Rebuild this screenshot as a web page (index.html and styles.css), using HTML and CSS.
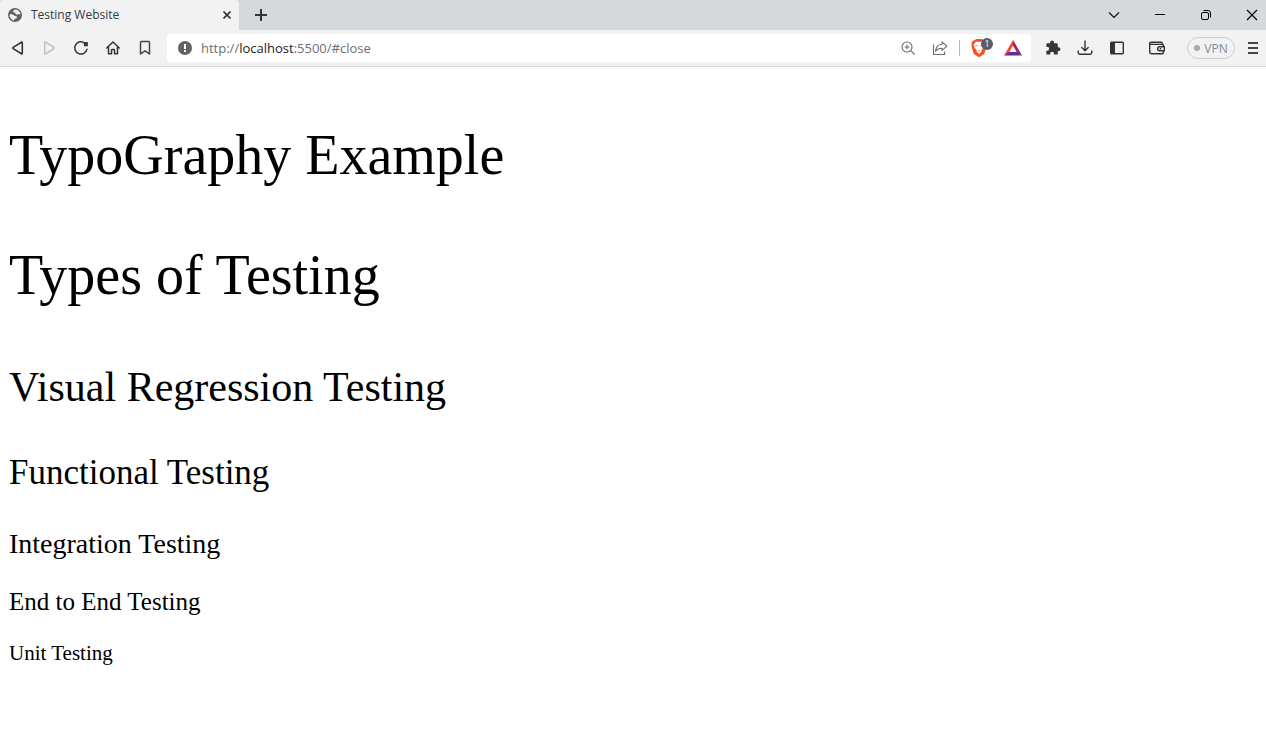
FILE: index.html
```
<!DOCTYPE html>
<html lang="en">
<head>
    <meta charset="UTF-8">
    <meta name="viewport" content="width=device-width, initial-scale=1.0">
    <title>Testing Website</title>
    <link rel="stylesheet" href="styles.css">
</head>
<body>
    <header class="browser">
        <div class="tab-strip">
            <div class="tab">
                <svg class="favicon" width="14" height="14" viewBox="0 0 14 14">
                    <circle cx="7" cy="7" r="7" fill="#5f6368"/>
                    <path d="M8 1.6C6.2 1.8 5 2.8 5.2 3.8 5.4 4.8 7.2 4.4 7.6 5.4 8 6.6 9.4 6.8 10.4 6.2 11.2 5.8 12 6.4 12.4 7A5.5 5.5 0 0 0 8 1.6Z" fill="#f2f2f2"/>
                    <path d="M1.6 6.4C3.4 6 5 6.2 6 7.2 6.6 8 7.4 7.8 8.4 8.2 9.4 8.8 9 10.2 7.8 10.6 6.6 11 6 11.6 6 12.4A5.5 5.5 0 0 1 1.6 6.4Z" fill="#f2f2f2"/>
                </svg>
                <span class="tab-title">Testing Website</span>
                <button class="tab-close" aria-label="Close tab">
                    <svg width="8" height="8" viewBox="0 0 8 8"><path d="M.5.5l7 7M7.5.5l-7 7" stroke="#333" stroke-width="1.6"/></svg>
                </button>
            </div>
            <button class="new-tab" aria-label="New tab">
                <svg width="12" height="12" viewBox="0 0 12 12"><path d="M6 0v12M0 6h12" stroke="#333" stroke-width="2"/></svg>
            </button>
            <div class="window-buttons">
                <button aria-label="Search tabs">
                    <svg width="12" height="12" viewBox="0 0 12 12"><path d="M1 3.5l5 5 5-5" fill="none" stroke="#111" stroke-width="1.2"/></svg>
                </button>
                <button aria-label="Minimize">
                    <svg width="12" height="12" viewBox="0 0 12 12"><path d="M1 5.5h10" stroke="#000"/></svg>
                </button>
                <button aria-label="Restore">
                    <svg width="12" height="12" viewBox="0 0 12 12" fill="none" stroke="#000"><rect x="1.5" y="3.5" width="7" height="7" rx="1.5"/><path d="M3.5 1.5H8a2.500 2.500 0 0 1 2.500 2.500v4.500"/></svg>
                </button>
                <button aria-label="Close">
                    <svg width="12" height="12" viewBox="0 0 12 12"><path d="M1 1l10 10M11 1L1 11" stroke="#000" stroke-width="1.2"/></svg>
                </button>
            </div>
        </div>

        <div class="toolbar">
            <div class="nav-buttons">
                <button aria-label="Back">
                    <svg width="16" height="16" viewBox="0 0 16 16"><path d="M13.300 2.700v10.600q0 1-.9.5L4.200 8.600q-.8-.6 0-1.200l8.200-5.200q.9-.5.9.5z" fill="none" stroke="#333" stroke-width="1.6"/></svg>
                </button>
                <button aria-label="Forward" disabled>
                    <svg width="16" height="16" viewBox="0 0 16 16"><path d="M3.700 2.700v10.600q0 1 .9.5l8.200-5.200q.8-.6 0-1.200L4.600 2.200q-.9-.5-.9.5z" fill="none" stroke="#bbb" stroke-width="1.4"/></svg>
                </button>
                <button aria-label="Reload">
                    <svg width="16" height="16" viewBox="0 0 16 16"><path d="M14 9.200A6.200 6.200 0 1 1 11.800 3" fill="none" stroke="#333" stroke-width="1.5" stroke-linecap="round"/><path d="M10.500 2.300L14.800 2V6.200H11z" fill="#333"/></svg>
                </button>
                <button aria-label="Home">
                    <svg width="16" height="16" viewBox="0 0 16 16"><path d="M1.700 8L8 2l6.300 6M3.500 7v6.800h3V10q0-.6.6-.6h1.800q.6 0 .6.6v3.800h3V7" fill="none" stroke="#333" stroke-width="1.5" stroke-linecap="round" stroke-linejoin="round"/></svg>
                </button>
                <button aria-label="Bookmark">
                    <svg width="16" height="16" viewBox="0 0 16 16"><path d="M3.500 14V2.500q0-.9.9-.9h7.200q.9 0 .9.9V14L8 10.800z" fill="none" stroke="#444" stroke-width="1.5" stroke-linejoin="round"/></svg>
                </button>
            </div>

            <div class="address-bar">
                <svg width="14" height="14" viewBox="0 0 14 14"><circle cx="7" cy="7" r="7" fill="#5f6368"/><path d="M7 3v5M7 9v2" stroke="#fff" stroke-width="2"/></svg>
                <a class="url" href="#close">http://<span class="host">localhost</span>:5500/#close</a>
                <div class="address-actions">
                    <button aria-label="Zoom">
                        <svg width="16" height="16" viewBox="0 0 16 16" fill="none" stroke="#6b6e73" stroke-width="1.1"><circle cx="7" cy="7" r="5"/><path d="M10.700 10.700l3.800 3.800M7 4.600v4.800M4.600 7h4.800"/></svg>
                    </button>
                    <button aria-label="Share">
                        <svg width="16" height="16" viewBox="0 0 16 16" fill="none" stroke="#6b6e73" stroke-width="1.1"><path d="M1.500 4.500v10H12.500V11.500"/><path d="M10 2l5 4.200-5 4.200V8.200C7 8.100 5 9 3.500 11.200 3.800 7.500 6 4.600 10 4.300z" stroke-linejoin="round"/></svg>
                    </button>
                    <span class="divider"></span>
                    <button class="shields" aria-label="Brave Shields">
                        <svg width="16" height="18" viewBox="0 0 16 18">
                            <path d="M5 0h6l1.400 1.600 1.600-.1L15.600 4l-.5 1.400.4 1.500-2 7q-.3 1-1.200 1.600L8 18.300l-4.300-2.800q-.9-.6-1.200-1.600l-2-7 .4-1.500L.4 4 2 1.500l1.600.1z" fill="#fb4c1b"/>
                            <path d="M8 3l2.800-.5 2.700 3-1 1.400.3 1.800-2.500 2.200.3 1.700L8 14.900l-2.600-2.300.3-1.700-2.500-2.200.3-1.800-1-1.400 2.700-3z" fill="#fff"/>
                            <path d="M4.500 6l2.200.5-.4 1.300zM11.500 6l-2.200.5.4 1.300zM6.300 11l1.700.8 1.700-.8L8 12.700z" fill="#fb4c1b"/>
                        </svg>
                        <span class="badge">1</span>
                    </button>
                    <button aria-label="Brave Rewards">
                        <svg width="18" height="16" viewBox="0 0 18 16">
                            <path d="M9 0L0 15.500l5-3L9 5.500z" fill="#ff4724"/>
                            <path d="M9 0l9 15.500-5-3L9 5.500z" fill="#9e1f63"/>
                            <path d="M0 15.500h18l-5-3.500H5z" fill="#662d91"/>
                        </svg>
                    </button>
                </div>
            </div>

            <div class="tool-buttons">
                <button aria-label="Extensions">
                    <svg width="16" height="16" viewBox="0 0 16 16"><path d="M13.600 7.300h-.8V4.500q0-1.300-1.300-1.300H9V2.300a1.900 1.900 0 0 0-3.800 0v.9H2.500q-1.200 0-1.200 1.200v2.400h.9a2 2 0 0 1 0 4h-.9v2.600q0 1.200 1.200 1.200h2.700v-.9a1.900 1.900 0 0 1 3.800 0v.9h2.500q1.300 0 1.300-1.200V11h.8a1.850 1.850 0 0 0 0-3.700z" fill="#33373b"/></svg>
                </button>
                <button aria-label="Downloads">
                    <svg width="16" height="16" viewBox="0 0 16 16" fill="none" stroke="#333" stroke-width="1.4" stroke-linecap="round"><path d="M8 1v9.500M4.800 7.500L8 10.700l3.200-3.200M1.200 11v1.500q0 1.700 1.700 1.700h10.200q1.700 0 1.700-1.700V11"/></svg>
                </button>
                <button aria-label="Sidebar">
                    <svg width="16" height="16" viewBox="0 0 16 16"><rect x="1.700" y="2.200" width="12.600" height="11.600" rx="1" fill="none" stroke="#333" stroke-width="1.4"/><path d="M2 2h4v12H2z" fill="#333"/></svg>
                </button>
                <button class="wallet" aria-label="Wallet">
                    <svg width="16" height="16" viewBox="0 0 16 16" fill="none" stroke="#333" stroke-width="1.4"><path d="M14.300 7V5.300q0-.9-.9-.9H2.500q-1.800 0-1.800-1 0-1.100 1.500-1.100h10q1 0 1 1v1M.7 3.300V12q0 1.700 1.700 1.700h11q.9 0 .9-.9V11"/><path d="M15.300 6.800h-4.600a2 2 0 0 0 0 4h4.600zM10.700 8.800h1.500"/></svg>
                </button>
                <button class="vpn"><span class="dot"></span>VPN</button>
                <button aria-label="Menu">
                    <svg width="10" height="12" viewBox="0 0 10 12"><path d="M0 1h10M0 6h10M0 11h10" stroke="#444" stroke-width="2"/></svg>
                </button>
            </div>
        </div>
    </header>

    <main class="content">
        <h1>TypoGraphy Example</h1>
        <h1>Types of Testing</h1>
        <h2>Visual Regression Testing</h2>
        <h3>Functional Testing</h3>
        <h4>Integration Testing</h4>
        <h5>End to End Testing</h5>
        <h6>Unit Testing</h6>
    </main>
</body>
</html>
```
FILE: styles.css
```
* {
    box-sizing: border-box;
}
body {
    margin: 0;
    background-color: white;
    color: black;
    font-family: "Liberation Serif", "Times New Roman", serif;
}
button {
    display: flex;
    align-items: center;
    justify-content: center;
    flex-shrink: 0;
    padding: 0;
    border: none;
    background: none;
    font-family: inherit;
}

/* browser window */
.browser {
    font-family: "Open Sans", "Segoe UI", sans-serif;
    background-color: #f2f2f2;
    border-bottom: 1px solid #d5d9dc;
}
.tab-strip {
    display: flex;
    height: 30px;
    background-color: #d5d9dc;
}
.tab {
    display: flex;
    align-items: center;
    width: 239px;
    padding: 0 8px;
    background-color: #f2f2f2;
    border-radius: 4px 4px 0 0;
}
.tab-title {
    flex: 1;
    margin-left: 9px;
    font-size: 12px;
    line-height: 16px;
    color: #333b45;
}
.tab-close {
    width: 8px;
    height: 16px;
}
.new-tab {
    width: 44px;
}
.window-buttons {
    display: flex;
    margin-left: auto;
}
.window-buttons button {
    width: 46px;
}
.window-buttons button:last-child {
    width: 37px;
    padding-left: 9px;
}
.toolbar {
    display: flex;
    align-items: center;
    height: 36px;
}
.nav-buttons {
    display: flex;
    padding: 0 6px 0 1px;
}
.nav-buttons button,
.tool-buttons button {
    width: 32px;
    height: 28px;
}
.address-bar {
    display: flex;
    flex: 1;
    align-items: center;
    height: 28px;
    padding: 0 9px 0 11px;
    background-color: white;
    border-radius: 4px;
}
.url {
    margin-left: 9px;
    font-size: 13px;
    line-height: 20px;
    color: #6b7075;
    text-decoration: none;
}
.host {
    color: #222;
}
.address-actions {
    display: flex;
    align-items: center;
    gap: 11px;
    margin-left: auto;
}
.address-actions button:first-child {
    margin-right: 5px;
}
.divider {
    width: 1px;
    height: 16px;
    background-color: #b5b8bd;
}
.shields {
    position: relative;
    width: 22px;
    justify-content: flex-start;
}
.badge {
    position: absolute;
    top: -1px;
    right: 0;
    width: 12px;
    height: 12px;
    border-radius: 6px;
    background-color: #5a5c66;
    color: white;
    font-size: 9px;
    line-height: 12px;
}
.tool-buttons {
    display: flex;
    align-items: center;
    padding-left: 6px;
}
.tool-buttons .wallet {
    margin: 0 14px 0 8px;
}
.tool-buttons .vpn {
    gap: 4px;
    width: 48px;
    height: 22px;
    border: 1px solid #ccced1;
    border-radius: 11px;
    font-size: 12px;
    color: #838b95;
}
.dot {
    width: 6px;
    height: 6px;
    border-radius: 50%;
    background-color: #a5abb3;
}
.tool-buttons button:last-child {
    width: 31px;
    padding-left: 4px;
}

/* typography */
.content {
    display: flow-root;
    padding: 0 9px;
}
h1, h2, h3, h4, h5, h6 {
    margin: 1em 0;
    font-weight: normal;
}
h1 {
    font-size: 56px;
    line-height: 64px;
}
h2 {
    font-size: 42px;
    line-height: 48px;
}
h3 {
    font-size: 35px;
    line-height: 40px;
}
h4 {
    font-size: 28px;
    line-height: 32px;
}
h5 {
    font-size: 25px;
    line-height: 28px;
}
h6 {
    font-size: 21px;
    line-height: 24px;
}
```
